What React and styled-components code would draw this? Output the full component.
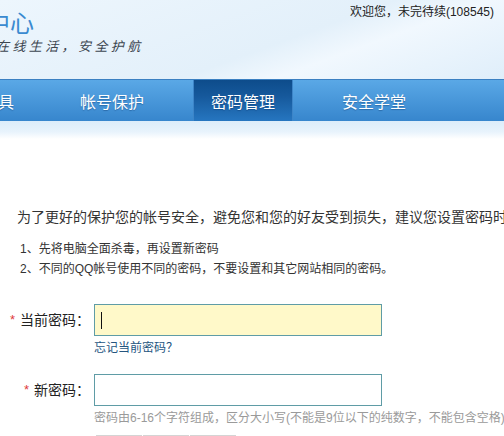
import React from 'react';
import styled, { createGlobalStyle } from 'styled-components';

const GlobalStyle = createGlobalStyle`
  html, body {
    margin: 0;
    padding: 0;
    background: #fff;
    overflow: hidden;
  }
  body {
    font-family: "Liberation Sans", "Noto Sans CJK SC", sans-serif;
    color: #333;
  }
`;

const Page = styled.div`
  width: 504px;
  height: 436px;
  overflow: hidden;
`;

const Header = styled.div`
  height: 79px;
  display: flex;
  justify-content: space-between;
  align-items: flex-start;
  background: linear-gradient(160deg, #edf6fd 0%, #e3f0fa 55%, #f1f8fe 68%, #dfeefa 100%);
`;

const Brand = styled.div`
  display: flex;
  flex-direction: column;
`;

const Logo = styled.div`
  margin: 7px 0 0 -14px;
  font-family: "Noto Sans CJK SC", sans-serif;
  font-size: 24px;
  line-height: 30px;
  color: #3a8ad0;
`;

const Slogan = styled.div`
  margin: 1px 0 0 -4px;
  font-family: "Noto Sans CJK SC", sans-serif;
  font-size: 13px;
  line-height: 16px;
  font-style: italic;
  letter-spacing: 3.4px;
  color: #3c4650;
  white-space: nowrap;
`;

const Welcome = styled.div`
  margin: 4px 10px 0 0;
  font-size: 12px;
  line-height: 16px;
  color: #222;
  white-space: nowrap;
`;

const Nav = styled.div`
  height: 42px;
  display: flex;
  gap: 32px;
  border-top: 1px solid #3b80c2;
  box-sizing: border-box;
  background: linear-gradient(#5aa8e6, #3786cd);
  overflow: hidden;
`;

const Tab = styled.div`
  flex: 0 0 98px;
  display: flex;
  align-items: center;
  justify-content: center;
  font-family: "Noto Sans CJK SC", sans-serif;
  font-size: 16px;
  color: #fff;
  text-shadow: 0 1px 1px rgba(0, 40, 90, 0.35);
  white-space: nowrap;
  background: ${(p) => (p.$active ? 'linear-gradient(#0d4c8b, #16599c 40%, #2676c0)' : 'transparent')};
  border-left: ${(p) => (p.$active ? '1px solid #3d85c8' : 'none')};
  border-right: ${(p) => (p.$active ? '1px solid #3d85c8' : 'none')};

  &:first-child {
    margin-left: -67px;
  }
`;

const Band = styled.div`
  height: 18px;
  background: linear-gradient(#dcedfa, #e8f3fc 60%, #ffffff);
`;

const Content = styled.div`
  padding: 68px 0 0 17px;
`;

const Intro = styled.p`
  margin: 0;
  font-size: 14px;
  line-height: 20px;
  color: #333;
  white-space: nowrap;
`;

const Tips = styled.ol`
  margin: 12px 0 0;
  padding: 0 0 0 3px;
  list-style: none;
`;

const Tip = styled.li`
  font-size: 12px;
  line-height: 20px;
  color: #333;
  white-space: nowrap;
`;

const Form = styled.div`
  margin: 25px 0 0 -17px;
  display: flex;
  flex-direction: column;
`;

const Row = styled.div`
  display: flex;
  align-items: center;
  margin-top: ${(p) => p.$gap || 0}px;
`;

const Label = styled.label`
  width: 90px;
  margin-right: 4px;
  text-align: right;
  font-size: 14px;
  line-height: 20px;
  color: #222;
  white-space: nowrap;
`;

const Star = styled.span`
  color: #e03a3a;
  font-size: 13px;
  margin-right: 5px;
  position: relative;
  top: -1px;
`;

const Field = styled.div`
  width: 288px;
  height: 32px;
  box-sizing: border-box;
  border: 1px solid #5f9ca6;
  background: ${(p) => (p.$focused ? '#fff9c9' : '#fff')};
  display: flex;
  align-items: center;
  padding-left: 6px;
`;

const Caret = styled.span`
  width: 1px;
  height: 17px;
  background: #111;
`;

const Below = styled.div`
  margin-left: 94px;
  margin-top: ${(p) => p.$gap || 0}px;
  font-size: 12px;
  line-height: 18px;
  white-space: nowrap;
`;

const ForgotLink = styled.a`
  color: #25557f;
  text-decoration: none;
`;

const Hint = styled.span`
  color: #9a9a9a;
`;

const Meter = styled.div`
  margin: 8px 0 0 96px;
  display: flex;
  gap: 1px;
`;

const MeterBar = styled.div`
  width: 46px;
  height: 4px;
  background: #d4d4d4;
`;

export default function App() {
  return (
    <Page>
      <GlobalStyle />
      <Header>
        <Brand>
          <Logo>中心</Logo>
          <Slogan>在线生活，安全护航</Slogan>
        </Brand>
        <Welcome>欢迎您，未完待续(108545)</Welcome>
      </Header>
      <Nav>
        <Tab>安全工具</Tab>
        <Tab>帐号保护</Tab>
        <Tab $active>密码管理</Tab>
        <Tab>安全学堂</Tab>
      </Nav>
      <Band />
      <Content>
        <Intro>为了更好的保护您的帐号安全，避免您和您的好友受到损失，建议您设置密码时</Intro>
        <Tips>
          <Tip>1、先将电脑全面杀毒，再设置新密码</Tip>
          <Tip>2、不同的QQ帐号使用不同的密码，不要设置和其它网站相同的密码。</Tip>
        </Tips>
        <Form>
          <Row>
            <Label><Star>*</Star>当前密码：</Label>
            <Field $focused><Caret /></Field>
          </Row>
          <Below $gap={3}>
            <ForgotLink href="#">忘记当前密码？</ForgotLink>
          </Below>
          <Row $gap={17}>
            <Label><Star>*</Star>新密码：</Label>
            <Field />
          </Row>
          <Below $gap={3}>
            <Hint>密码由6-16个字符组成，区分大小写(不能是9位以下的纯数字，不能包含空格)</Hint>
          </Below>
          <Meter>
            <MeterBar />
            <MeterBar />
            <MeterBar />
          </Meter>
        </Form>
      </Content>
    </Page>
  );
}
